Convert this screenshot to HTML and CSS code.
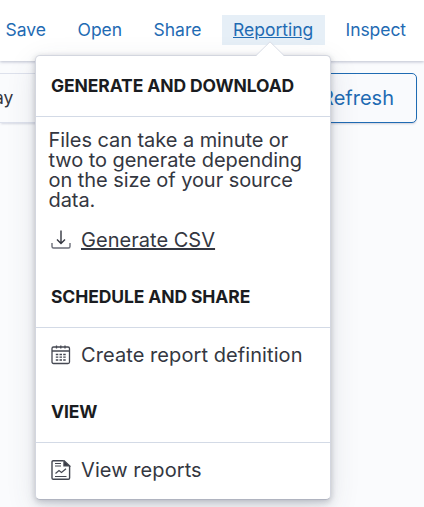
FILE: index.html
```html
<!DOCTYPE html>
<html lang="en">
<head>
<meta charset="utf-8">
<title>Reporting</title>
<link rel="stylesheet" href="styles.css">
</head>
<body>
<nav class="nav">
  <a class="link save">Save</a>
  <a class="link open">Open</a>
  <a class="link share">Share</a>
  <a class="link active">Reporting</a>
  <a class="link inspect">Inspect</a>
</nav>
<main class="toolbar">
  <div class="date"><span>ay</span></div>
  <button class="refresh"><span>Refresh</span></button>
</main>
<section class="popover">
  <svg class="arrow" width="30" height="16" viewBox="0 0 30 16"><path d="M0 16L1 15L15 1L29 15L30 16Z" fill="#fff"/><path d="M1 14.5L15 .8L29 14.5" fill="none" stroke="#d9dde6"/></svg>
  <h2 class="title">GENERATE AND DOWNLOAD</h2>
  <p class="hint">Files can take a minute or<br>two to generate depending<br>on the size of your source<br>data.</p>
  <a class="item csv">
    <svg class="icon" viewBox="0 0 20 20" fill="none" stroke="#343741" stroke-width="1.4"><path d="M10 .5v13M6 9.500l4 4 4-4"/><path d="M1 13v3.500Q1 18 2.500 18h15q1.500 0 1.500-1.500V13" stroke="#6b6e78"/></svg>
    <span class="label">Generate CSV</span>
  </a>
  <h2 class="title">SCHEDULE AND SHARE</h2>
  <a class="item create">
    <svg class="icon" viewBox="0 0 20 20" fill="none" stroke="#454852" stroke-width="1.3"><rect x="1" y="2" width="17.500" height="16.500" rx="1.500"/><path d="M1 6h17.500M5.500 .5v3M9.800 .5v3M14 .5v3"/><path d="M4.800 9.500h2.500m1.200 0h2.500m1.200 0h2.500M4.800 12.200h2.500m1.200 0h2.500m1.200 0h2.500M4.800 15h2.500m1.200 0h2.500m1.200 0h2.500" stroke-width="1.300"/></svg>
    <span class="label">Create report definition</span>
  </a>
  <h2 class="title">VIEW</h2>
  <a class="item view">
    <svg class="icon" viewBox="0 0 20 20" fill="none" stroke="#454852" stroke-width="1.400"><path d="M12.500 .7H2.300Q1 .7 1 2v16q0 1.300 1.300 1.300h15q1.300 0 1.300-1.300V6"/><path d="M13 .7v5h5.300z" fill="#343741"/><path d="M4 3.500h6M4 6h6M4 16.500h11.500M4.500 13.500l3.500-3 2.500 2 4.500-3.800" stroke-width="1.200"/></svg>
    <span class="label">View reports</span>
  </a>
</section>
</body>
</html>
```
FILE: styles.css
```css
* { box-sizing: border-box; }
body {
  margin: 0;
  width: 424px;
  height: 507px;
  overflow: hidden;
  position: relative;
  background: #fafbfd;
  font-family: Inter, sans-serif;
  color: #343741;
}
.nav {
  display: flex;
  height: 61px;
  padding-top: 15px;
  background: #fff;
  box-shadow: 0 1px 3px rgba(70, 80, 120, .35);
  position: relative;
}
.link {
  height: 30px;
  line-height: 30px;
  font-size: 17.5px;
  color: #1f6bb3;
  white-space: nowrap;
}
.save { margin-left: 5.5px; width: 72px; }
.open { width: 76px; }
.share { width: 68.5px; }
.active {
  width: 103px;
  padding-left: 11px;
  background: #e6eff7;
  text-decoration: underline;
}
.inspect { margin-left: 20.5px; letter-spacing: -.06px; }
.toolbar {
  display: flex;
  justify-content: space-between;
  padding: 12px 7px 0 0;
}
.date {
  width: 200px;
  height: 50px;
  border: 1px solid #dde1ec;
  border-left: 0;
  line-height: 48px;
  font-size: 17.5px;
  box-shadow: 0 2px 2px -1px rgba(70, 80, 120, .2);
}
.date span { display: block; margin-left: -6px; }
.refresh {
  width: 120px;
  height: 50px;
  padding: 0 22px 0 0;
  border: 1px solid #1f6bb3;
  border-radius: 5px;
  background: #f9fafd;
  box-shadow: 0 2px 2px -1px rgba(70, 80, 120, .25);
  color: #1f6bb3;
  font: 20px Inter, sans-serif;
  text-align: right;
}
.popover {
  position: absolute;
  left: 35px;
  top: 55px;
  width: 296px;
  height: 445px;
  border: 1px solid #d3d6df;
  border-bottom-color: #b0b4c0;
  border-radius: 5px;
  background: #fff;
  box-shadow: 0 1px 5px rgba(60, 65, 85, .18), 0 4px 10px rgba(60, 65, 85, .15), 0 9px 30px rgba(60, 65, 85, .12);
}
.arrow { position: absolute; left: 219px; top: -15px; }
.title {
  margin: 0;
  height: 61px;
  padding-left: 15px;
  border-bottom: 1px solid #d3dae6;
  line-height: 60px;
  font-size: 17.5px;
  font-weight: 700;
  letter-spacing: -.11px;
  color: #1a1c21;
  white-space: nowrap;
}
.hint {
  margin: 0;
  height: 96px;
  padding: 13px 0 0 12.5px;
  font-size: 20px;
  line-height: 20px;
  letter-spacing: -.06px;
  white-space: nowrap;
}
.item {
  display: flex;
  align-items: center;
  height: 54px;
  padding-left: 15px;
  font-size: 20px;
}
.icon { width: 20px; height: 20px; margin-right: 10px; }
.label { white-space: nowrap; letter-spacing: .08px; }
.csv .label {
  letter-spacing: .03px;
  text-decoration: underline;
  text-decoration-thickness: 1.5px;
}
```
